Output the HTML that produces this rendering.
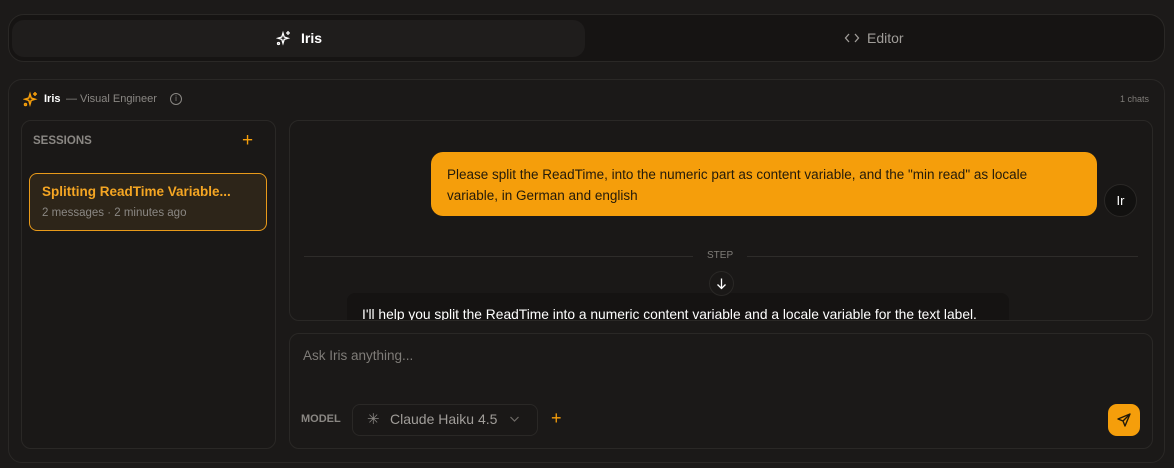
<!DOCTYPE html><html><head><meta charset="utf-8"><style>
*{box-sizing:border-box;margin:0;padding:0}
body{width:1174px;height:468px;background:#1c1a19;font-family:"Liberation Sans",sans-serif;position:relative;overflow:hidden;color:#e8e6e3}
.a{position:absolute}
.t{position:absolute;white-space:nowrap}
</style></head><body>
<div class="a" style="left:8px;top:14px;width:1157px;height:48px;border:1px solid #2a2826;border-radius:16px;background:#161413"></div>
<div class="a" style="left:12px;top:20px;width:573px;height:37px;border-radius:12px;background:#1f1d1c"></div>
<svg class="a" style="left:276px;top:30px" width="16" height="16" viewBox="0 0 16 16" fill="none" stroke="#fff" stroke-width="1.3"><path d="M7 3 L8.2 7 L12 8.2 L8.2 9.4 L7 13.4 L5.8 9.4 L2 8.2 L5.8 7Z"/><path d="M12 1v4M10 3h4"/><circle cx="2.5" cy="13.5" r="1"/></svg>
<div class="t" style="left:301px;top:30px;font-size:14px;font-weight:bold;color:#fff">Iris</div>
<svg class="a" style="left:844px;top:31px" width="16" height="14" viewBox="0 0 16 14" fill="none" stroke="#a09d99" stroke-width="1.3"><path d="M5 3 L1.5 7 L5 11 M11 3 L14.5 7 L11 11"/></svg>
<div class="t" style="left:867px;top:30px;font-size:14px;color:#a09d99">Editor</div>

<div class="a" style="left:8px;top:79px;width:1157px;height:384px;border:1px solid #2a2826;border-radius:14px;background:#1b1918"></div>
<svg class="a" style="left:23px;top:91px" width="16" height="16" viewBox="0 0 16 16" fill="none" stroke="#f59e0b" stroke-width="1.5"><path d="M7 3 L8.2 7 L12 8.2 L8.2 9.4 L7 13.4 L5.8 9.4 L2 8.2 L5.8 7Z"/><path d="M12 1v4M10 3h4"/><circle cx="2.5" cy="13.5" r="1"/></svg>
<div class="t" style="left:44px;top:93px;font-size:11px;font-weight:bold;color:#fff">Iris</div>
<div class="t" style="left:66px;top:93px;font-size:11px;color:#8a8783">— Visual Engineer</div>
<div class="a" style="left:170px;top:93px;width:12px;height:12px;border:1px solid #8a8783;border-radius:50%;font-size:8px;color:#8a8783;text-align:center;line-height:10px">i</div>
<div class="t" style="left:1120px;top:94px;font-size:9px;color:#7f7c78">1 chats</div>

<div class="a" style="left:21px;top:120px;width:255px;height:329px;border:1px solid #2a2826;border-radius:10px;background:#1a1817"></div>
<div class="t" style="left:33px;top:135px;font-size:11.5px;font-weight:bold;color:#8a8783">SESSIONS</div>
<div class="t" style="left:242px;top:130px;font-size:19px;color:#f59e0b">+</div>
<div class="a" style="left:29px;top:173px;width:238px;height:58px;border:1px solid #e89a1a;border-radius:8px;background:#2d2519"></div>
<div class="t" style="left:42px;top:184px;font-size:13.5px;font-weight:bold;color:#f5a623">Splitting ReadTime Variable...</div>
<div class="t" style="left:42px;top:207px;font-size:11.5px;color:#8a8783">2 messages · 2 minutes ago</div>

<div class="a" style="left:289px;top:120px;width:864px;height:201px;border:1px solid #2a2826;border-radius:10px;background:#1a1817;overflow:hidden">
<div class="a" style="left:141px;top:31px;width:666px;height:64px;border-radius:12px;background:#f59e0b"></div>
<div class="t" style="left:157px;top:43px;font-size:13.5px;line-height:21px;color:#231a0a;white-space:normal;width:610px">Please split the ReadTime, into the numeric part as content variable, and the "min read" as locale variable, in German and english</div>
<div class="a" style="left:814px;top:63px;width:33px;height:33px;border-radius:50%;background:#121110;border:1px solid #2a2826;color:#fff;font-size:13px;text-align:center;line-height:31px">Ir</div>
<div class="a" style="left:14px;top:135px;width:834px;height:1px;background:#2e2c2a"></div>
<div class="t" style="left:403px;top:129px;background:#1a1817;padding:0 14px;font-size:10px;color:#7f7c78">STEP</div>
<div class="a" style="left:57px;top:172px;width:662px;height:40px;border-radius:8px;background:#151312"></div>
<div class="a" style="left:419px;top:150px;width:25px;height:25px;border-radius:50%;background:#1a1817;border:1px solid #2a2826"></div>
<svg class="a" style="left:425px;top:156px" width="13" height="13" viewBox="0 0 13 13" fill="none" stroke="#fff" stroke-width="1.3"><path d="M6.5 1.5v10M2.5 7.5l4 4 4-4"/></svg>
<div class="t" style="left:72px;top:186px;font-size:13.8px;color:#fff">I'll help you split the ReadTime into a numeric content variable and a locale variable for the text label.</div>
</div>

<div class="a" style="left:289px;top:333px;width:864px;height:116px;border:1px solid #2a2826;border-radius:10px;background:#1b1918"></div>
<div class="t" style="left:303px;top:348px;font-size:13.5px;color:#7f7c78">Ask Iris anything...</div>
<div class="t" style="left:301px;top:413px;font-size:11px;font-weight:bold;color:#8a8783">MODEL</div>
<div class="a" style="left:352px;top:404px;width:186px;height:32px;border:1px solid #2a2826;border-radius:8px;background:#1a1817"></div>
<div class="t" style="left:367px;top:410px;font-size:15px;color:#8a8783">✳</div>
<div class="t" style="left:390px;top:411px;font-size:14px;color:#a09d99">Claude Haiku 4.5</div>
<svg class="a" style="left:509px;top:415px" width="11" height="8" viewBox="0 0 11 8" fill="none" stroke="#6f6c68" stroke-width="1.2"><path d="M1.5 2l4 4 4-4"/></svg>
<div class="t" style="left:551px;top:408px;font-size:18px;color:#f59e0b">+</div>
<div class="a" style="left:1108px;top:404px;width:32px;height:32px;border-radius:9px;background:#f59e0b"></div>
<svg class="a" style="left:1116px;top:412px" width="16" height="16" viewBox="0 0 16 16" fill="none" stroke="#231a0a" stroke-width="1.4" stroke-linejoin="round"><path d="M14 2 L2 7 L7 9 L9 14 Z M14 2 L7 9"/></svg>
</body></html>
